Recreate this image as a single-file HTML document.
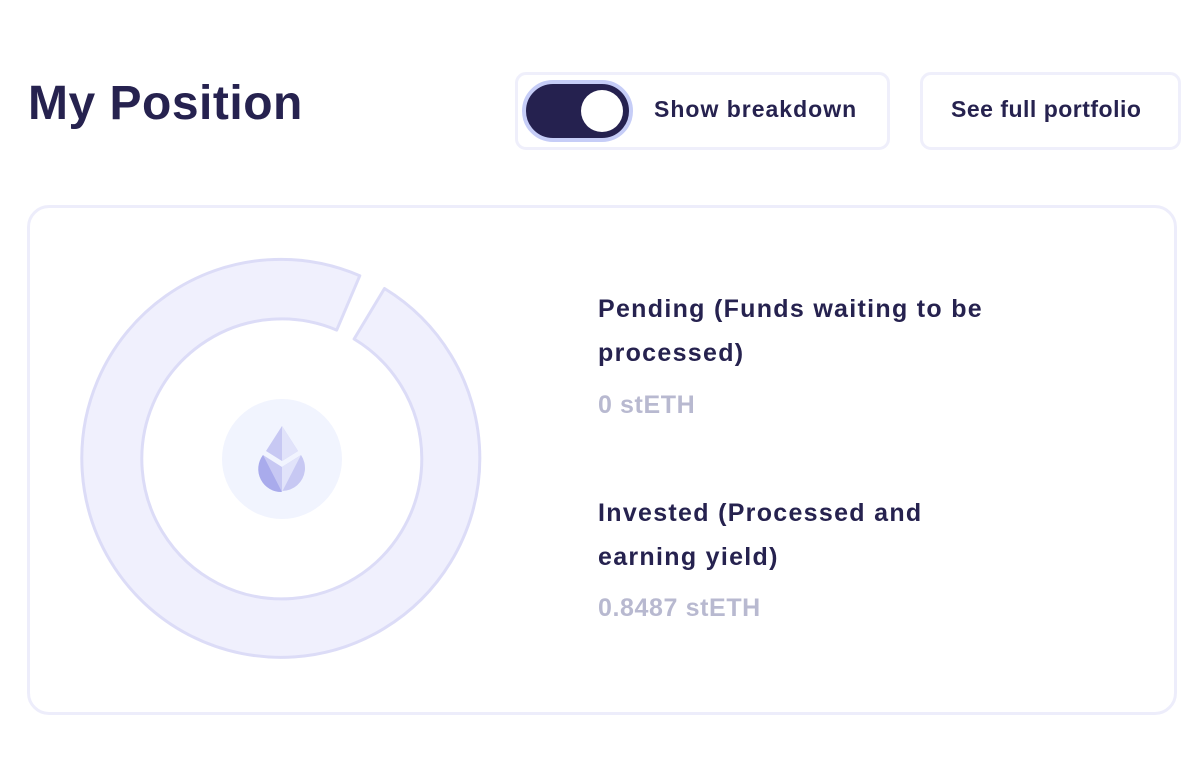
<!DOCTYPE html>
<html><head><meta charset="utf-8"><style>
*{margin:0;padding:0;box-sizing:border-box}
body{width:1200px;height:758px;background:#fff;font-family:"Liberation Sans",sans-serif;color:#26224f;position:relative;overflow:hidden}
.abs{position:absolute}
h1{position:absolute;left:28px;top:76px;font-size:48px;font-weight:bold;letter-spacing:0.5px}
.btn{position:absolute;border:3px solid #efeffb;border-radius:11px;font-weight:bold;font-size:22px}
.card{position:absolute;left:27px;top:205px;width:1150px;height:510px;border:3px solid #ededfb;border-radius:22px}
.t{position:absolute;left:598px;font-size:25px;font-weight:bold;line-height:44px;letter-spacing:1.3px;white-space:nowrap}
.v{position:absolute;left:598px;font-size:25px;color:#b8b9d0;font-weight:bold;letter-spacing:0.6px}
</style></head><body>
<h1>My Position</h1>
<div class="btn" style="left:515px;top:72px;width:375px;height:78px"></div>
<div class="abs" style="left:522px;top:80px;width:111px;height:62px;border-radius:31px;background:#25214f;border:4px solid #c6cdf7"></div>
<div class="abs" style="left:581px;top:90px;width:42px;height:42px;border-radius:50%;background:#fff"></div>
<div class="abs" style="left:654px;top:96px;font-size:23px;font-weight:bold;letter-spacing:1px">Show breakdown</div>
<div class="btn" style="left:920px;top:72px;width:261px;height:78px"></div>
<div class="abs" style="left:951px;top:96px;font-size:23px;font-weight:bold;letter-spacing:0.5px">See full portfolio</div>
<div class="card"></div>
<svg class="abs" style="left:0;top:0" width="1200" height="758">
<path d="M384.5 288.5 A199 199 0 1 1 359.8 275.7 L336.7 330.1 A140 140 0 1 0 354.1 339 Z" fill="#f0f0fd" stroke="#dcdcf7" stroke-width="3" stroke-linejoin="round"/>
<circle cx="282" cy="459" r="60" fill="#f1f4fe"/>
<polygon points="282,426 266,451 282,461 298,451" fill="#c7c8f3"/>
<polygon points="282,426 282,461 298,451" fill="#e1e3fa"/>
<path d="M263 455 L282 467 L301 455 A23 23 0 1 1 263 455 Z" fill="#c7c8f3"/>
<path d="M263 455 L282 492 A23 23 0 0 1 263 455 Z" fill="#a9abec"/>
<path d="M282 467 L301 455 L282 492 Z" fill="#e1e3fa"/>
</svg>
<div class="t" style="top:287px">Pending (Funds waiting to be<br>processed)</div>
<div class="v" style="top:391px">0 stETH</div>
<div class="t" style="top:491px">Invested (Processed and<br>earning yield)</div>
<div class="v" style="top:594px">0.8487 stETH</div>
</body></html>
